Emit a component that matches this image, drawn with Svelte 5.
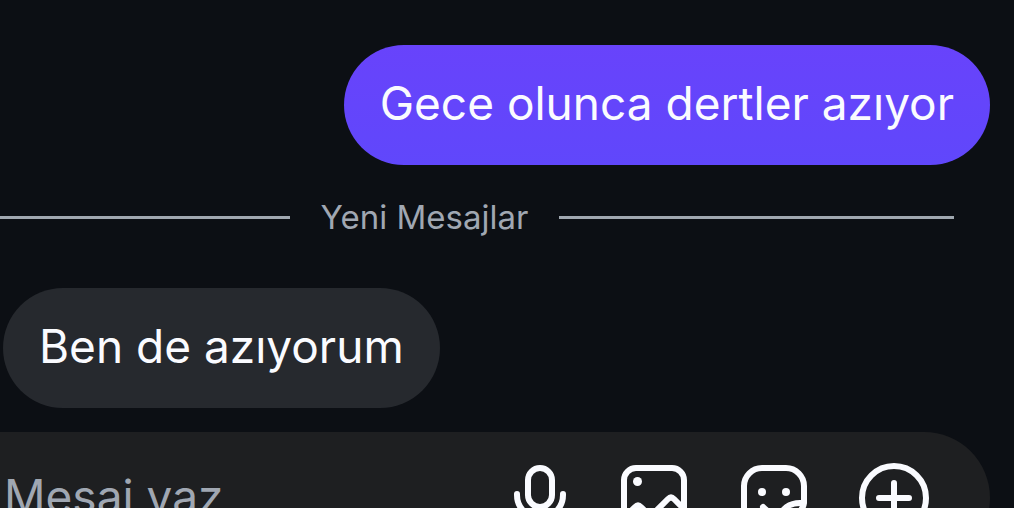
<script lang="ts">
	let draft = $state('');
</script>

<main class="chat">
	<div class="messages">
		<p class="bubble sent">Gece olunca dertler azıyor</p>
		<div class="divider" role="separator">
			<span>Yeni Mesajlar</span>
		</div>
		<p class="bubble received">Ben de azıyorum</p>
	</div>

	<form class="composer" onsubmit={(e) => e.preventDefault()}>
		<input type="text" placeholder="Mesaj yaz" aria-label="Mesaj yaz" bind:value={draft} />
		<div class="actions">
			<button type="button" class="mic" aria-label="Ses kaydı">
				<svg viewBox="0 0 60 72">
					<rect x="18" y="6" width="24" height="39" rx="12" />
					<path d="M7 32v1a23 23 0 0 0 46 0v-1M30 56v10M18 66h24" />
				</svg>
			</button>
			<button type="button" aria-label="Fotoğraf">
				<svg viewBox="0 0 72 72">
					<rect x="6" y="6" width="60" height="60" rx="12" />
					<circle class="dot" cx="19.5" cy="19.5" r="4.5" />
					<path d="M7 55l10-10q3-3 6 0l17 17M34 53l16-16q3-3 6 0l10 10" />
				</svg>
			</button>
			<button type="button" aria-label="Çıkartma">
				<svg viewBox="0 0 72 72">
					<path d="M38 66H24A18 18 0 0 1 6 48V24A18 18 0 0 1 24 6h24a18 18 0 0 1 18 18v17q-1 6-6 10L46 63q-4 3-8 3z" />
					<path d="M65 41c-12-1-23 4-26 22M25 45q5 6 13 6" />
					<circle class="dot" cx="24" cy="30" r="4" />
					<circle class="dot" cx="48" cy="30" r="4" />
				</svg>
			</button>
			<button type="button" aria-label="Ekle">
				<svg viewBox="0 0 72 72">
					<circle cx="36" cy="36" r="32" />
					<path d="M36 21v30M21 36h30" />
				</svg>
			</button>
		</div>
	</form>
</main>

<style>
	:global(body) {
		margin: 0;
		background: #0c0f14;
	}

	.chat {
		box-sizing: border-box;
		height: 100vh;
		overflow: hidden;
		padding: 45px 24px 0 0;
		background: #0c0f14;
		color: #fafbff;
		font-family: Inter, 'Liberation Sans', sans-serif;
	}

	.messages {
		display: flex;
		flex-direction: column;
		margin-bottom: 24px;
	}

	.bubble {
		margin: 0;
		padding: 28px 36px 32px;
		border-radius: 60px;
		font-size: 46px;
		line-height: 60px;
	}

	.sent {
		align-self: flex-end;
		background: linear-gradient(#6843fb, #6047fb);
	}

	.received {
		align-self: flex-start;
		margin-left: 3px;
		background: #26292e;
	}

	/* the rule runs on past the left edge */
	.divider {
		display: flex;
		align-items: center;
		gap: 31px;
		margin: 32px 36px 51px -105px;
		color: #a0a7b2;
		font-size: 33px;
		line-height: 40px;
	}

	.divider::before,
	.divider::after {
		content: '';
		flex: 1;
		height: 3px;
		background: #a0a8b0;
	}

	.composer {
		display: flex;
		align-items: center;
		box-sizing: border-box;
		height: 132px;
		padding: 0 60px 0 4px;
		border-radius: 0 66px 66px 0;
		background: #1e1f21;
	}

	input {
		flex: 1;
		min-width: 0;
		padding: 0 0 4px;
		border: none;
		outline: none;
		background: none;
		color: inherit;
		font: inherit;
		font-size: 46px;
		line-height: 60px;
	}

	input::placeholder {
		color: #a0a7b2;
		opacity: 1;
	}

	.actions {
		display: flex;
		gap: 48px;
	}

	button {
		width: 72px;
		height: 72px;
		padding: 0;
		border: none;
		background: none;
		color: inherit;
		cursor: pointer;
	}

	.mic {
		width: 60px;
	}

	svg {
		display: block;
		width: 100%;
		height: 100%;
		fill: none;
		stroke: currentColor;
		stroke-width: 6;
		stroke-linecap: round;
		stroke-linejoin: round;
	}

	.dot {
		fill: currentColor;
		stroke: none;
	}
</style>
